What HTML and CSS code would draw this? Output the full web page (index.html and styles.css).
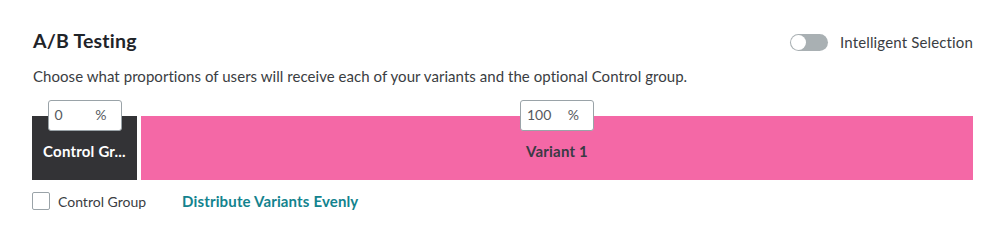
FILE: index.html
```html
<!DOCTYPE html>
<html lang="en">
<head>
    <meta charset="UTF-8">
    <title>A/B Testing</title>
    <link rel="stylesheet" href="styles.css">
</head>
<body>
    <section class="ab-panel">
        <div class="ab-header">
            <h2>A/B Testing</h2>
            <label class="toggle">
                <span class="toggle-track"><span class="toggle-knob"></span></span>
                Intelligent Selection
            </label>
        </div>

        <p class="ab-desc">Choose what proportions of users will receive each of your variants and the optional Control group.</p>

        <div class="split-bar">
            <div class="segment control" style="flex: 0 0 105px;">
                <div class="pct-input"><span>0</span><span>%</span></div>
                <span class="segment-label">Control Gr...</span>
            </div>
            <div class="segment variant" style="flex: 1 1 auto;">
                <div class="pct-input"><span>100</span><span>%</span></div>
                <span class="segment-label">Variant 1</span>
            </div>
        </div>

        <div class="ab-footer">
            <label class="check"><span class="check-box"></span>Control Group</label>
            <a href="#" class="link">Distribute Variants Evenly</a>
        </div>
    </section>
</body>
</html>
```

FILE: styles.css
```css
:root {
    --font: "Lato", "Noto Sans", Arial, sans-serif;
    --text-main: #1f2429;
    --text-body: #3a3d42;
    --dark: #333336;
    --pink: #f468a6;
    --teal: #13838e;
}
body {
    margin: 0;
    background: #ffffff;
    font-family: var(--font);
    color: var(--text-main);
}
.ab-panel {
    padding: 27px 33px 0 32px;
}
.ab-header {
    display: flex;
    align-items: center;
    justify-content: space-between;
    height: 26px;
}
h2 {
    margin: 0 0 0 1px;
    font-size: 19.5px;
    font-weight: 700;
    letter-spacing: 0.2px;
}
.toggle {
    display: flex;
    align-items: center;
    gap: 12px;
    font-size: 15px;
    letter-spacing: 0.15px;
    color: var(--text-body);
    margin-top: 4px;
}
.toggle-track {
    width: 38px;
    height: 17px;
    border-radius: 9px;
    background: #a9b0b3;
    display: flex;
    align-items: center;
}
.toggle-knob {
    width: 15px;
    height: 15px;
    margin-left: 1px;
    border-radius: 50%;
    background: #ffffff;
}
.ab-desc {
    margin: 14px 0 0 1px;
    font-size: 15px;
    letter-spacing: 0.05px;
    color: var(--text-body);
}
.split-bar {
    display: flex;
    gap: 4px;
    margin-top: 31px;
    height: 64px;
}
.segment {
    position: relative;
    display: flex;
    align-items: center;
    justify-content: center;
    padding-top: 6px;
    box-sizing: border-box;
}
.segment.control { background: var(--dark); color: #ffffff; }
.segment.variant { background: var(--pink); color: #3a3a44; }
.segment-label {
    font-size: 15px;
    font-weight: 700;
    letter-spacing: 0.2px;
    white-space: nowrap;
}
.pct-input {
    position: absolute;
    top: -16px;
    left: 50%;
    transform: translateX(-50%);
    width: 74px;
    height: 31px;
    box-sizing: border-box;
    border: 1px solid #9aa3a8;
    border-radius: 3px;
    background: #ffffff;
    display: flex;
    align-items: center;
    justify-content: space-between;
    padding: 0 14px 2px 6px;
    font-size: 14px;
    color: #55595e;
}
.ab-footer {
    display: flex;
    align-items: center;
    gap: 36px;
    margin-top: 12px;
}
.check {
    display: flex;
    align-items: center;
    gap: 8px;
    font-size: 14px;
    color: var(--text-body);
}
.check-box {
    width: 18px;
    height: 18px;
    box-sizing: border-box;
    border: 1px solid #9aa3a8;
    border-radius: 2px;
}
.link {
    color: var(--teal);
    font-size: 15px;
    font-weight: 700;
    letter-spacing: 0.15px;
    text-decoration: none;
}
```
